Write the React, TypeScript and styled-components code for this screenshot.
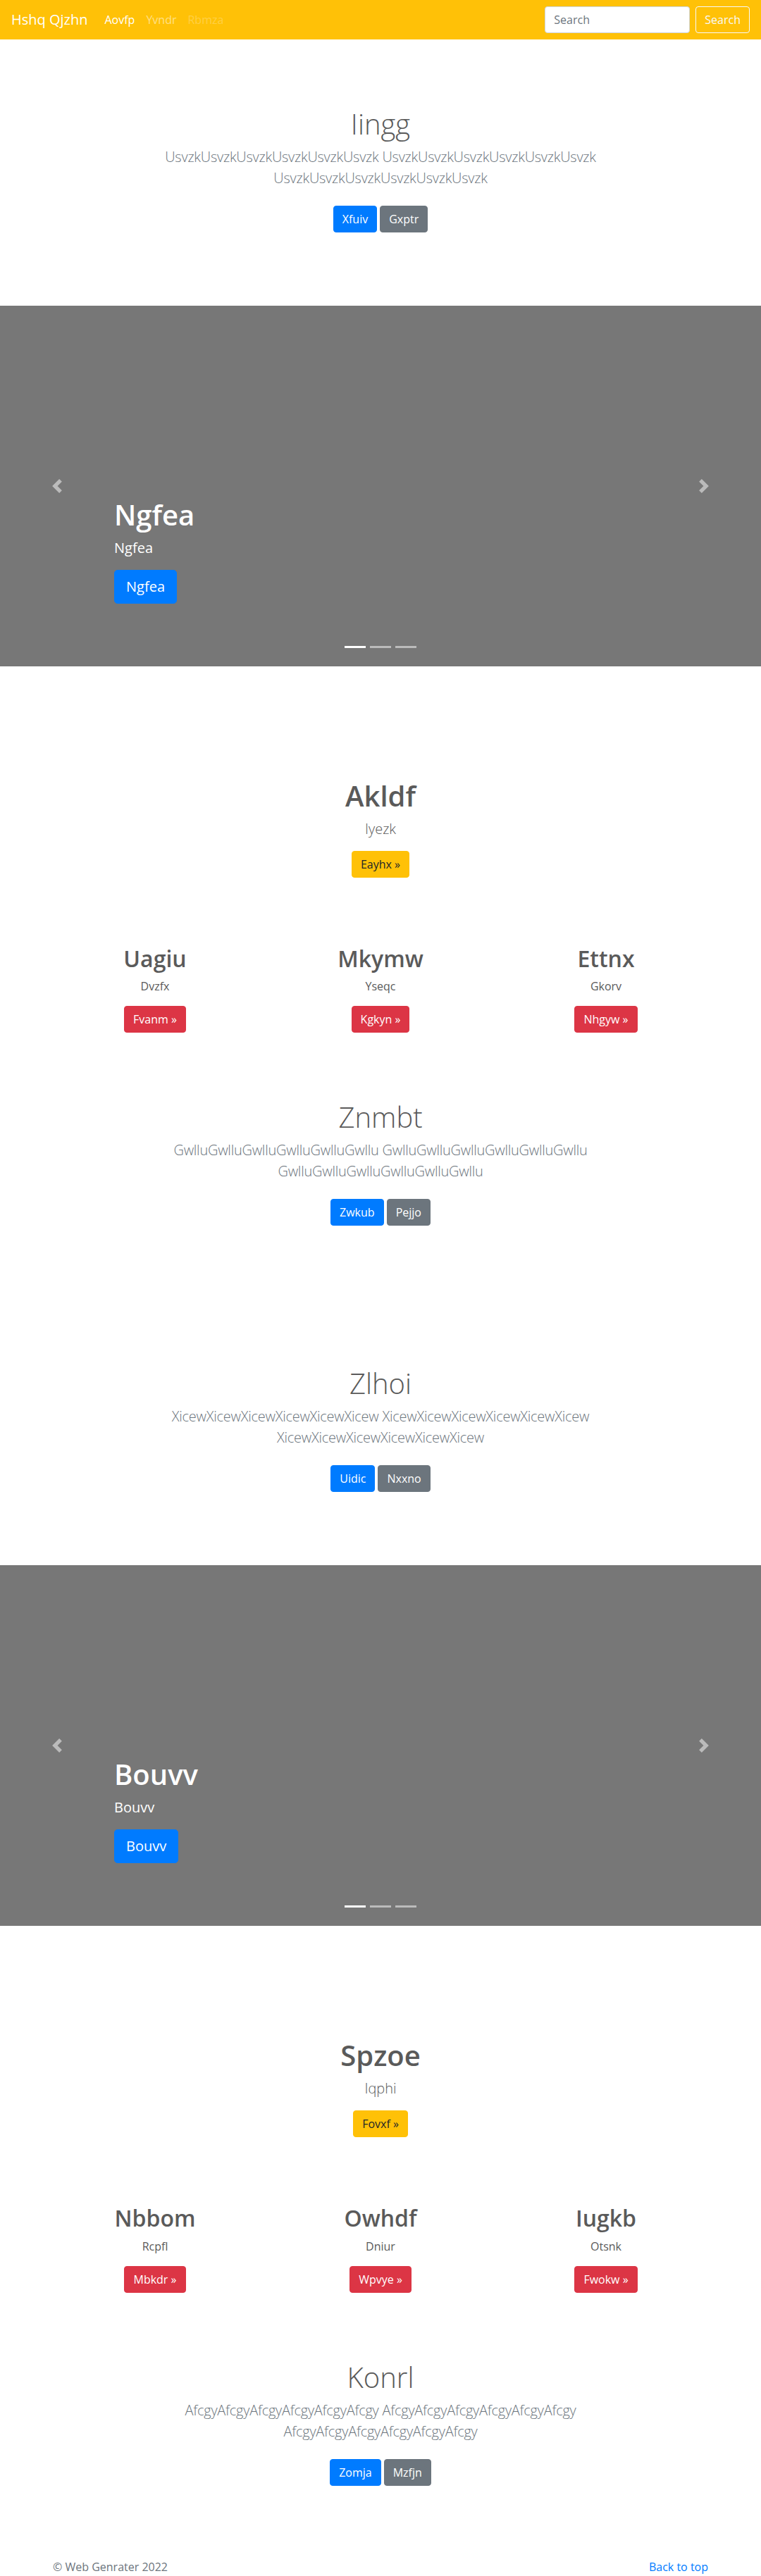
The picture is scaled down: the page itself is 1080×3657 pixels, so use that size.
import React from "react";
import styled, { createGlobalStyle } from "styled-components";

const FONT = `"Open Sans", "Segoe UI", Roboto, "Helvetica Neue", Arial, sans-serif`;

const GlobalStyle = createGlobalStyle`
  *, *::before, *::after { box-sizing: border-box; }
  html, body { margin: 0; padding: 0; }
  body {
    font-family: ${FONT};
    font-size: 16px;
    line-height: 1.5;
    color: #5a5a5a;
    background: #fff;
  }
  h1, h2, p, ul, ol { margin: 0; padding: 0; }
`;

/* ---------- Buttons ---------- */
const palette = {
  primary: { bg: "#007bff", fg: "#fff" },
  secondary: { bg: "#6c757d", fg: "#fff" },
  warning: { bg: "#ffc107", fg: "#212529" },
  danger: { bg: "#dc3545", fg: "#fff" },
} as const;
type Variant = keyof typeof palette;

const Button = styled.a<{ $variant: Variant; $lg?: boolean }>`
  display: inline-block;
  font-weight: 400;
  text-align: center;
  vertical-align: middle;
  text-decoration: none;
  white-space: nowrap;
  cursor: pointer;
  border: 1px solid ${(p) => palette[p.$variant].bg};
  background: ${(p) => palette[p.$variant].bg};
  color: ${(p) => palette[p.$variant].fg};
  padding: ${(p) => (p.$lg ? "8px 16px" : "6px 12px")};
  font-size: ${(p) => (p.$lg ? "20px" : "16px")};
  line-height: 1.5;
  border-radius: ${(p) => (p.$lg ? "4.8px" : "4px")};
`;

/* ---------- Navbar ---------- */
const Navbar = styled.nav`
  display: flex;
  align-items: center;
  height: 56px;
  padding: 8px 16px;
  background: #ffc107;
`;
const Brand = styled.a`
  font-size: 20px;
  line-height: 30px;
  padding: 5px 0;
  margin-right: 16px;
  color: #fff;
  text-decoration: none;
  white-space: nowrap;
`;
const NavList = styled.ul`
  display: flex;
  flex: 1;
  list-style: none;
`;
const navColors = {
  active: "#fff",
  normal: "rgba(255,255,255,0.5)",
  disabled: "rgba(255,255,255,0.25)",
};
const NavLink = styled.a<{ $state: keyof typeof navColors }>`
  display: block;
  padding: 8px;
  line-height: 24px;
  color: ${(p) => navColors[p.$state]};
  text-decoration: none;
`;
const SearchForm = styled.form`
  display: flex;
  align-items: center;
  gap: 8px;
`;
const SearchInput = styled.input`
  width: 206px;
  height: 38px;
  padding: 6px 12px;
  font-family: ${FONT};
  font-size: 16px;
  line-height: 1.5;
  color: #495057;
  background: #fff;
  border: 1px solid #ced4da;
  border-radius: 4px;
  &::placeholder { color: #6c757d; }
`;
const OutlineLightButton = styled.button`
  height: 38px;
  padding: 6px 12px;
  font-family: ${FONT};
  font-size: 16px;
  line-height: 1.5;
  color: #f8f9fa;
  background: transparent;
  border: 1px solid #f8f9fa;
  border-radius: 4px;
`;

/* ---------- Hero (jumbotron) ---------- */
const Hero = styled.section`
  padding: 96px 15px;
  text-align: center;
`;
const HeroTitle = styled.h1`
  font-size: 40px;
  font-weight: 300;
  line-height: 1.2;
  margin-bottom: 8px;
`;
const Lead = styled.p<{ $muted?: boolean }>`
  font-size: 20px;
  font-weight: 300;
  line-height: 1.5;
  max-width: 720px;
  margin: 0 auto 16px;
  letter-spacing: ${(p) => (p.$muted ? "-0.25px" : "0")};
  color: ${(p) => (p.$muted ? "#6c757d" : "inherit")};
`;
const HeroActions = styled.p`
  display: flex;
  justify-content: center;
  gap: 4px;
  padding: 8px 0;
`;

/* ---------- Carousel ---------- */
const Carousel = styled.div`
  position: relative;
  height: 512px;
  margin-bottom: 64px;
  background: #777;
  overflow: hidden;
`;
const Caption = styled.div`
  position: absolute;
  left: 15%;
  right: 15%;
  bottom: 53px;
  z-index: 10;
  padding: 20px 0;
  color: #fff;
  text-align: left;
`;
const CaptionTitle = styled.h1`
  font-size: 40px;
  font-weight: 600;
  line-height: 1.2;
  margin-bottom: 8px;
`;
const CaptionText = styled.p`
  font-size: 20px;
  line-height: 30px;
  margin-bottom: 16px;
`;
const Control = styled.a<{ $side: "left" | "right" }>`
  position: absolute;
  top: 0;
  bottom: 0;
  ${(p) => p.$side}: 0;
  z-index: 1;
  width: 15%;
  display: flex;
  align-items: center;
  justify-content: center;
  opacity: 0.5;
`;
const Indicators = styled.ol`
  position: absolute;
  left: 0;
  right: 0;
  bottom: 0;
  z-index: 15;
  display: flex;
  justify-content: center;
  margin: 0 15% 16px;
  list-style: none;
`;
const Indicator = styled.li<{ $active?: boolean }>`
  box-sizing: content-box;
  width: 30px;
  height: 3px;
  margin: 0 3px;
  background: #fff;
  background-clip: padding-box;
  border-top: 10px solid transparent;
  border-bottom: 10px solid transparent;
  opacity: ${(p) => (p.$active ? 1 : 0.5)};
`;

/* ---------- Feature ---------- */
const Feature = styled.section`
  padding-top: 96px;
  text-align: center;
`;
const Container = styled.div`
  width: 960px;
  max-width: 100%;
  margin: 0 auto;
  padding: 0 15px;
`;
const FeatureTitle = styled.h1`
  font-size: 40px;
  font-weight: 600;
  line-height: 1.2;
  margin-bottom: 8px;
`;
const ButtonLine = styled.p<{ $last?: boolean }>`
  margin-bottom: ${(p) => (p.$last ? "0" : "16px")};
`;
const Columns = styled.div`
  display: grid;
  grid-template-columns: repeat(3, 1fr);
  margin: 96px -15px 0;
`;
const Column = styled.div`
  padding: 0 15px;
`;
const ColumnTitle = styled.h2`
  font-size: 32px;
  font-weight: 600;
  line-height: 1.2;
  margin-bottom: 8px;
`;
const ColumnText = styled.p`
  margin-bottom: 16px;
`;

/* ---------- Footer ---------- */
const Footer = styled.footer`
  width: 960px;
  margin: 0 auto;
  padding: 0 15px;
  display: flex;
  justify-content: space-between;
  line-height: 22px;
  color: #6c757d;
`;
const FooterLink = styled.a`
  color: #007bff;
  text-decoration: none;
`;

/* ---------- Icons ---------- */
const Chevron = ({ dir }: { dir: "prev" | "next" }) => (
  <svg width="20" height="20" viewBox="0 0 8 8" fill="#fff" aria-hidden="true">
    <path
      d={
        dir === "prev"
          ? "M5.25 0l-4 4 4 4 1.5-1.5L4.25 4l2.5-2.5L5.25 0z"
          : "M2.75 0l-1.5 1.5L3.75 4l-2.5 2.5L2.75 8l4-4-4-4z"
      }
    />
  </svg>
);

/* ---------- Sections ---------- */
const HeroBlock = ({
  title,
  word,
  primary,
  secondary,
}: {
  title: string;
  word: string;
  primary: string;
  secondary: string;
}) => {
  const chunk = word.repeat(6);
  return (
    <Hero>
      <HeroTitle>{title}</HeroTitle>
      <Lead $muted>{`${chunk} ${chunk} ${chunk}`}</Lead>
      <HeroActions>
        <Button $variant="primary">{primary}</Button>
        <Button $variant="secondary">{secondary}</Button>
      </HeroActions>
    </Hero>
  );
};

const Slide = ({ label }: { label: string }) => (
  <Carousel>
    <Caption>
      <CaptionTitle>{label}</CaptionTitle>
      <CaptionText>{label}</CaptionText>
      <ButtonLine>
        <Button $variant="primary" $lg>
          {label}
        </Button>
      </ButtonLine>
    </Caption>
    <Control $side="left">
      <Chevron dir="prev" />
    </Control>
    <Control $side="right">
      <Chevron dir="next" />
    </Control>
    <Indicators>
      <Indicator $active />
      <Indicator />
      <Indicator />
    </Indicators>
  </Carousel>
);

type Col = { title: string; text: string; button: string };
const FeatureBlock = ({
  title,
  lead,
  button,
  cols,
}: {
  title: string;
  lead: string;
  button: string;
  cols: Col[];
}) => (
  <Feature>
    <Container>
      <FeatureTitle>{title}</FeatureTitle>
      <Lead>{lead}</Lead>
      <ButtonLine $last>
        <Button $variant="warning">{button} »</Button>
      </ButtonLine>
      <Columns>
        {cols.map((c) => (
          <Column key={c.title}>
            <ColumnTitle>{c.title}</ColumnTitle>
            <ColumnText>{c.text}</ColumnText>
            <ButtonLine $last>
              <Button $variant="danger">{c.button} »</Button>
            </ButtonLine>
          </Column>
        ))}
      </Columns>
    </Container>
  </Feature>
);

export default function App() {
  return (
    <>
      <GlobalStyle />
      <Navbar>
        <Brand>Hshq Qjzhn</Brand>
        <NavList>
          <li><NavLink $state="active">Aovfp</NavLink></li>
          <li><NavLink $state="normal">Yvndr</NavLink></li>
          <li><NavLink $state="disabled">Rbmza</NavLink></li>
        </NavList>
        <SearchForm onSubmit={(e) => e.preventDefault()}>
          <SearchInput type="text" placeholder="Search" aria-label="Search" />
          <OutlineLightButton type="submit">Search</OutlineLightButton>
        </SearchForm>
      </Navbar>

      <HeroBlock title="Iingg" word="Usvzk" primary="Xfuiv" secondary="Gxptr" />
      <Slide label="Ngfea" />
      <FeatureBlock
        title="Akldf"
        lead="Iyezk"
        button="Eayhx"
        cols={[
          { title: "Uagiu", text: "Dvzfx", button: "Fvanm" },
          { title: "Mkymw", text: "Yseqc", button: "Kgkyn" },
          { title: "Ettnx", text: "Gkorv", button: "Nhgyw" },
        ]}
      />
      <HeroBlock title="Znmbt" word="Gwllu" primary="Zwkub" secondary="Pejjo" />
      <HeroBlock title="Zlhoi" word="Xicew" primary="Uidic" secondary="Nxxno" />
      <Slide label="Bouvv" />
      <FeatureBlock
        title="Spzoe"
        lead="Iqphi"
        button="Fovxf"
        cols={[
          { title: "Nbbom", text: "Rcpfl", button: "Mbkdr" },
          { title: "Owhdf", text: "Dniur", button: "Wpvye" },
          { title: "Iugkb", text: "Otsnk", button: "Fwokw" },
        ]}
      />
      <HeroBlock title="Konrl" word="Afcgy" primary="Zomja" secondary="Mzfjn" />

      <Footer>
        <span>© Web Genrater 2022</span>
        <FooterLink href="#">Back to top</FooterLink>
      </Footer>
    </>
  );
}
